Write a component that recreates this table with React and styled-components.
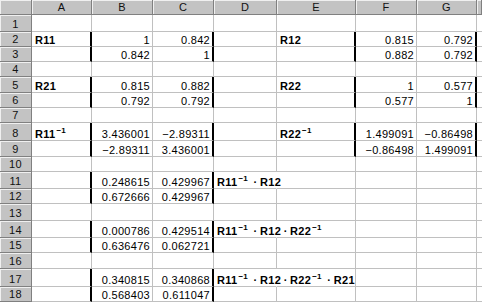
import React from 'react';
import styled, { createGlobalStyle } from 'styled-components';

const GlobalStyle = createGlobalStyle`
  html, body { margin: 0; padding: 0; background: #fff; }
  body { font-family: "Liberation Sans", Arial, "Noto Sans CJK JP", sans-serif; }
`;

const COLS = '32px 60px 61px 61px 63px 79px 61px 60px 1fr';
const GRID = '#c0c0c0';

const Sheet = styled.div`
  width: 482px;
  height: 302px;
  overflow: hidden;
  display: flex;
  flex-direction: column;
  font-size: 11px;
  letter-spacing: 0.3px;
  color: #000;
`;

const Row = styled.div`
  display: grid;
  grid-template-columns: ${COLS};
  height: ${(p) => p.$h}px;
  flex: none;
`;

const Head = styled.div`
  box-sizing: border-box;
  background: #c3c3c3;
  border-right: 1px solid #808080;
  border-bottom: 1px solid #808080;
  box-shadow: inset 1px 1px 0 #f0f0f0;
  display: flex;
  align-items: flex-end;
  justify-content: center;
  line-height: 11px;
  padding-bottom: 1px;
  font-size: 11px;
  color: #111;
`;

const Cell = styled.div`
  box-sizing: border-box;
  min-width: 0;
  border-bottom: 1px solid ${GRID};
  border-right: ${({ $edge, $open }) =>
    $edge ? '2px solid #000' : `1px solid ${$open ? '#fff' : GRID}`};
  display: flex;
  align-items: flex-end;
  justify-content: ${(p) => (p.$num ? 'flex-end' : 'flex-start')};
  padding: 0 2px 0 3px;
  line-height: 11px;
  white-space: nowrap;
  font-weight: ${(p) => (p.$bold ? 700 : 400)};
`;

const Sup = styled.sup`
  font-size: 8px;
  font-weight: 700;
  line-height: 0;
  vertical-align: 5px;
  margin-left: 1px;
  margin-right: ${(p) => (p.$trail ? 3 : 0)}px;
  letter-spacing: 0.2px;
`;

const Dot = styled.span`
  display: inline-block;
  width: 9px;
  text-align: center;
  font-weight: 700;
`;

const Term = ({ name, inv, trail }) => (
  <span>
    {name}
    {inv && <Sup $trail={trail}>−1</Sup>}
  </span>
);

const Formula = ({ terms }) => (
  <span>
    {terms.map((t, i) => (
      <React.Fragment key={i}>
        {i > 0 && <Dot>·</Dot>}
        <Term name={t[0]} inv={t[1]} trail={t[1] && i < terms.length - 1} />
      </React.Fragment>
    ))}
  </span>
);

const rows = [
  { h: 17 },
  { h: 15, frame: 'both', A: ['R11'], B: '1', C: '0.842', E: ['R12'], F: '0.815', G: '0.792' },
  { h: 15, frame: 'both', B: '0.842', C: '1', F: '0.882', G: '0.792' },
  { h: 15 },
  { h: 16, frame: 'both', A: ['R21'], B: '0.815', C: '0.882', E: ['R22'], F: '1', G: '0.577' },
  { h: 15, frame: 'both', B: '0.792', C: '0.792', F: '0.577', G: '1' },
  { h: 15 },
  { h: 18, frame: 'both', A: ['R11', true], B: '3.436001', C: '−2.89311', E: ['R22', true], F: '1.499091', G: '−0.86498' },
  { h: 16, frame: 'both', B: '−2.89311', C: '3.436001', F: '−0.86498', G: '1.499091' },
  { h: 15 },
  { h: 17, frame: 'left', B: '0.248615', C: '0.429967', D: [['R11', true], ['R12']] },
  { h: 15, frame: 'left', B: '0.672666', C: '0.429967' },
  { h: 17 },
  { h: 17, frame: 'left', B: '0.000786', C: '0.429514', D: [['R11', true], ['R12'], ['R22', true]] },
  { h: 15, frame: 'left', B: '0.636476', C: '0.062721' },
  { h: 16 },
  { h: 18, frame: 'left', B: '0.340815', C: '0.340868', D: [['R11', true], ['R12'], ['R22', true], ['R21']] },
  { h: 15, frame: 'left', B: '0.568403', C: '0.611047' },
];

const LETTERS = ['A', 'B', 'C', 'D', 'E', 'F', 'G'];

function edgeFor(row, col) {
  if (!row.frame) return false;
  if (col === 'A' || col === 'C') return true;
  if (row.frame === 'both' && (col === 'E' || col === 'G')) return true;
  return false;
}

function renderValue(v) {
  if (v == null) return null;
  if (typeof v === 'string') return <span>{v}</span>;
  if (Array.isArray(v[0])) return <Formula terms={v} />;
  return <Term name={v[0]} inv={v[1]} />;
}

export default function App() {
  return (
    <>
      <GlobalStyle />
      <Sheet>
        <Row $h={15}>
          <Head />
          {LETTERS.map((l) => (
            <Head key={l}>{l}</Head>
          ))}
          <Head />
        </Row>
        {rows.map((row, i) => (
          <Row key={i} $h={row.h}>
            <Head>{i + 1}</Head>
            {LETTERS.map((col) => {
              const v = row[col];
              const isNum = typeof v === 'string';
              return (
                <Cell
                  key={col}
                  $num={isNum}
                  $bold={v != null && !isNum}
                  $edge={edgeFor(row, col)}
                  $open={col === 'D' && Array.isArray(v)}
                >
                  {renderValue(v)}
                </Cell>
              );
            })}
            <Cell />
          </Row>
        ))}
      </Sheet>
    </>
  );
}
